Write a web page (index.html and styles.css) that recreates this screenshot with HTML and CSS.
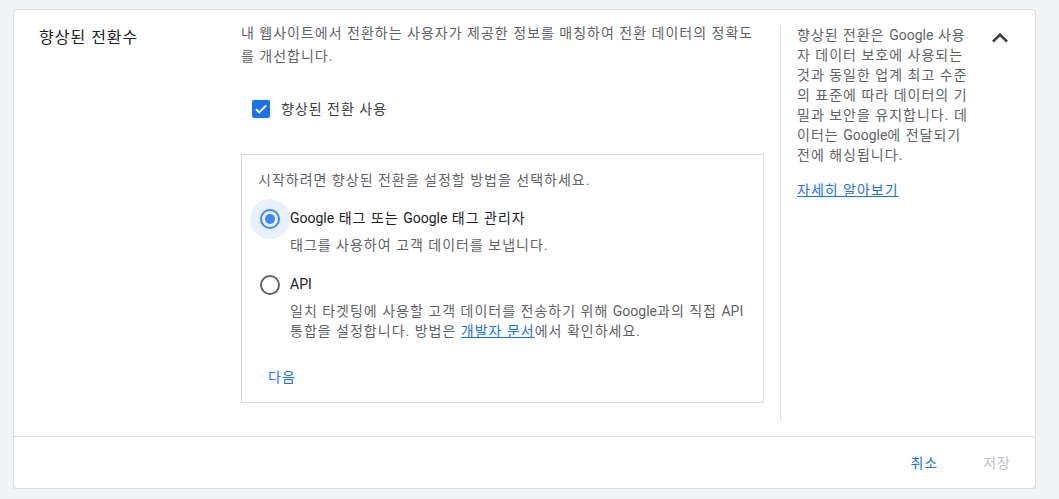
FILE: index.html
```html
<!DOCTYPE html>
<html lang="ko">
<head>
<meta charset="utf-8">
<title>향상된 전환수</title>
<link rel="stylesheet" href="styles.css">
</head>
<body>
<div class="card">
  <div class="section">
    <div class="title">향상된 전환수</div>
    <div class="main">
      <p class="desc">내 웹사이트에서 전환하는 사용자가 제공한 정보를 매칭하여 전환 데이터의 정확도를 개선합니다.</p>
      <label class="check-row">
        <span class="checkbox">
          <svg viewBox="0 0 18 18" width="18" height="18"><rect x="0" y="0" width="18" height="18" rx="2" fill="#1a73e8"/><path d="M4 9.2l3.2 3.2L14.2 5.4" fill="none" stroke="#fff" stroke-width="2"/></svg>
        </span>
        <span class="check-label">향상된 전환 사용</span>
      </label>
      <div class="box">
        <p class="box-intro">시작하려면 향상된 전환을 설정할 방법을 선택하세요.</p>
        <div class="option">
          <span class="radio-wrap selected">
            <span class="radio on"><span class="dot"></span></span>
          </span>
          <div class="option-text">
            <div class="option-label"><span class="en">Google</span> 태그 또는 <span class="en">Google</span> 태그 관리자</div>
            <div class="option-sub">태그를 사용하여 고객 데이터를 보냅니다.</div>
          </div>
        </div>
        <div class="option">
          <span class="radio-wrap">
            <span class="radio"></span>
          </span>
          <div class="option-text">
            <div class="option-label"><span class="en">API</span></div>
            <div class="option-sub">일치 타겟팅에 사용할 고객 데이터를 전송하기 위해 <span class="en">Google</span>과의 직접 <span class="en">API</span> 통합을 설정합니다. 방법은 <a href="#" class="link">개발자 문서</a>에서 확인하세요.</div>
          </div>
        </div>
        <button class="text-btn next">다음</button>
      </div>
    </div>
    <div class="aside">
      <p class="aside-text">향상된 전환은 <span class="en">Google</span> 사용자 데이터 보호에 사용되는 것과 동일한 업계 최고 수준의 표준에 따라 데이터의 기밀과 보안을 유지합니다. 데이터는 <span class="en">Google</span>에 전달되기 전에 해싱됩니다.</p>
      <a href="#" class="link aside-link">자세히 알아보기</a>
    </div>
    <div class="toggle">
      <svg viewBox="0 0 24 24" width="32" height="32"><path d="M12 8l-6 6 1.41 1.41L12 10.83l4.59 4.58L18 14z" fill="#3c4043"/></svg>
    </div>
  </div>
  <div class="footer">
    <button class="text-btn cancel">취소</button>
    <button class="text-btn save" disabled>저장</button>
  </div>
</div>
</body>
</html>
```

FILE: styles.css
```css
* { box-sizing: border-box; }
html, body { margin: 0; padding: 0; }
body {
  background: #f1f3f4;
  font-family: Roboto, "Noto Sans CJK KR", sans-serif;
  color: #202124;
  letter-spacing: 1px;
  padding: 9px 23px 0 13px;
}
p { margin: 0; }
.en { letter-spacing: 0; }
.card {
  background: #fff;
  border: 1px solid #dadce0;
  border-radius: 4px;
  width: 1023px;
  box-shadow: 0 1px 1px rgba(60,64,67,0.08);
}
.section {
  display: flex;
  height: 426px;
}
.title {
  width: 227px;
  padding: 16px 0 0 25px;
  font-size: 16px;
  line-height: 24px;
  color: #202124;
}
.main {
  width: 523px;
  padding-top: 12px;
}
.desc {
  width: 518px;
  font-size: 14px;
  line-height: 23px;
  color: #5f6368;
}
.check-row {
  display: flex;
  align-items: center;
  margin: 32px 0 0 11px;
  height: 18px;
}
.checkbox { width: 18px; height: 18px; display: block; }
.checkbox svg { display: block; }
.check-label {
  margin-left: 11px;
  font-size: 14px;
  line-height: 20px;
  color: #3c4043;
}
.box {
  margin-top: 36px;
  border: 1px solid #dadce0;
  padding: 15px 16px 7px 16px;
  height: 249px;
}
.box-intro {
  font-size: 14px;
  line-height: 20px;
  color: #5f6368;
}
.option {
  display: flex;
  margin-left: -8px;
  margin-top: 9px;
}
.option + .option { margin-top: 10px; }
.radio-wrap {
  flex: none;
  width: 40px;
  height: 40px;
  border-radius: 50%;
  display: flex;
  align-items: center;
  justify-content: center;
}
.radio-wrap.selected { background: #e8f0fe; }
.radio {
  width: 20px;
  height: 20px;
  border: 2px solid #5f6368;
  border-radius: 50%;
  display: flex;
  align-items: center;
  justify-content: center;
}
.radio.on { border-color: #4285f4; }
.dot {
  width: 10px;
  height: 10px;
  border-radius: 50%;
  background: #4285f4;
}
.option-text {
  padding-top: 9px;
  width: 462px;
}
.option-label {
  font-size: 14px;
  line-height: 20px;
  color: #202124;
}
.option-sub {
  margin-top: 7px;
  font-size: 14px;
  line-height: 20px;
  color: #5f6368;
}
.link {
  color: #1a73e8;
  text-decoration: underline;
}
.text-btn {
  background: none;
  border: none;
  font-family: Roboto, "Noto Sans CJK KR", sans-serif;
  letter-spacing: 1px;
  font-size: 14px;
  line-height: 20px;
  height: 36px;
  padding: 0 10px;
  cursor: pointer;
}
.next {
  margin-top: 18px;
  color: #1a73e8;
}
.aside {
  margin: 15px 0 0 16px;
  height: 395px;
  border-left: 1px solid #dadce0;
  padding-left: 16px;
  width: 202px;
}
.aside-text {
  width: 172px;
  font-size: 14px;
  line-height: 20px;
  color: #5f6368;
}
.aside-link {
  display: inline-block;
  margin-top: 15px;
  font-size: 14px;
  line-height: 20px;
}
.toggle {
  margin: 12px 0 0 2px;
  width: 32px;
  height: 32px;
}
.toggle svg { display: block; }
.footer {
  border-top: 1px solid #dadce0;
  height: 52px;
  display: flex;
  align-items: center;
  justify-content: flex-end;
  padding-right: 8px;
  gap: 13px;
}
.cancel { color: #1a73e8; padding: 0 16px; }
.save { color: #bdc1c6; padding: 0 16px; cursor: default; }
```
